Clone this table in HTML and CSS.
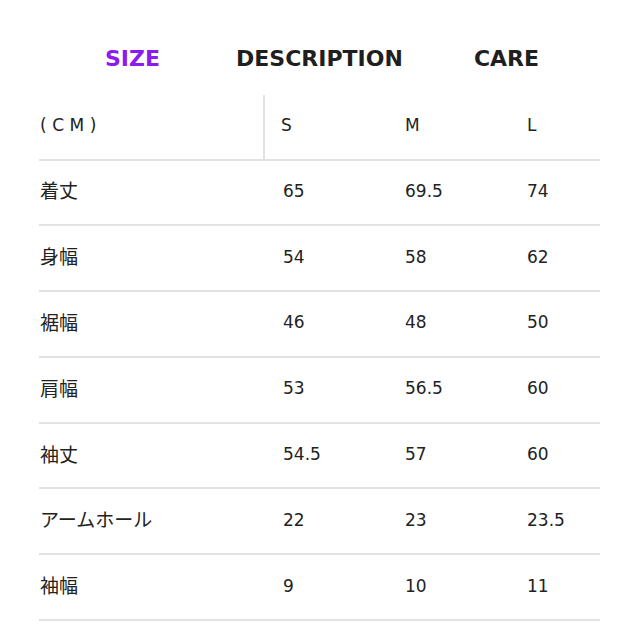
FILE: index.html
```html
<!DOCTYPE html>
<html lang="ja">
<head>
<meta charset="utf-8">
<link rel="stylesheet" href="styles.css">
</head>
<body>
<div class="wrap">
  <div class="tabs">
    <div class="tab active">SIZE</div>
    <div class="tab">DESCRIPTION</div>
    <div class="tab">CARE</div>
  </div>
  <div class="table">
    <div class="row head">
      <div class="cell label unit">(CM)</div>
      <div class="cell first">S</div>
      <div class="cell">M</div>
      <div class="cell">L</div>
    </div>
    <div class="row"><div class="cell label">着丈</div><div class="cell first">65</div><div class="cell">69.5</div><div class="cell">74</div></div>
    <div class="row"><div class="cell label">身幅</div><div class="cell first">54</div><div class="cell">58</div><div class="cell">62</div></div>
    <div class="row"><div class="cell label">裾幅</div><div class="cell first">46</div><div class="cell">48</div><div class="cell">50</div></div>
    <div class="row"><div class="cell label">肩幅</div><div class="cell first">53</div><div class="cell">56.5</div><div class="cell">60</div></div>
    <div class="row"><div class="cell label">袖丈</div><div class="cell first">54.5</div><div class="cell">57</div><div class="cell">60</div></div>
    <div class="row"><div class="cell label">アームホール</div><div class="cell first">22</div><div class="cell">23</div><div class="cell">23.5</div></div>
    <div class="row"><div class="cell label">袖幅</div><div class="cell first">9</div><div class="cell">10</div><div class="cell">11</div></div>
  </div>
</div>
</body>
</html>
```
FILE: styles.css
```css
html, body {
  margin: 0;
  padding: 0;
  background: #fff;
}
body {
  font-family: "DejaVu Sans", "Noto Sans CJK JP", sans-serif;
  color: #222;
}
.wrap {
  width: 561px;
  margin-left: 39px;
  padding-top: 44px;
}
.tabs {
  display: grid;
  grid-template-columns: 1fr 1fr 1fr;
  height: 51px;
}
.tab {
  text-align: center;
  font-weight: bold;
  font-size: 22px;
  line-height: 30px;
  color: #1f1f1f;
}
.tab.active {
  color: #8b1cf0;
}
.row {
  display: grid;
  grid-template-columns: 226px 122px 122px 1fr;
  height: 63.8px;
  border-bottom: 2px solid #e2e2e2;
  align-items: center;
  font-size: 17px;
}
.row.head {
  height: 63.5px;
}
.cell {
  padding-left: 18px;
  height: 100%;
  display: flex;
  align-items: center;
  padding-bottom: 3px;
  box-sizing: border-box;
}
.cell.label {
  padding-left: 1px;
  font-family: "Noto Sans CJK JP", sans-serif;
  font-size: 19px;
  padding-bottom: 5px;
}
.cell.unit {
  font-family: "DejaVu Sans", sans-serif;
  letter-spacing: 5.5px;
  font-size: 17px;
  padding-bottom: 3px;
}
.head .cell.label {
  border-right: 2px solid #e2e2e2;
}
.head .cell.first {
  padding-left: 16px;
}
```
